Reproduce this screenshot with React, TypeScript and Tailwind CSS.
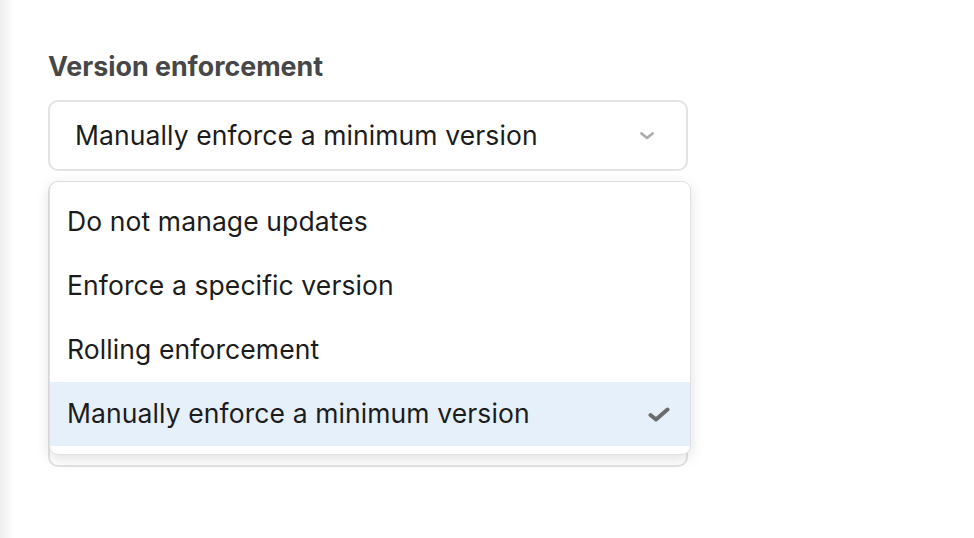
const options = [
  "Do not manage updates",
  "Enforce a specific version",
  "Rolling enforcement",
  "Manually enforce a minimum version",
];

const selected = "Manually enforce a minimum version";

function Chevron() {
  return (
    <svg width="14" height="8" viewBox="0 0 14 8" fill="none">
      <path
        d="M1.5 1.5 L7 6 L12.5 1.5"
        stroke="#adadad"
        strokeWidth="2.8"
        strokeLinecap="round"
        strokeLinejoin="round"
      />
    </svg>
  );
}

function Check() {
  return (
    <svg width="22" height="15" viewBox="0 0 22 15" fill="none">
      <path
        d="M2.5 8 L8 12.5 L19.5 2.5"
        stroke="#6b6b6b"
        strokeWidth="4"
        strokeLinecap="round"
        strokeLinejoin="round"
      />
    </svg>
  );
}

export default function App() {
  return (
    <div
      className="flex w-full h-[538px] bg-white overflow-hidden"
      style={{ fontFamily: "Inter, 'Noto Sans', sans-serif" }}
    >
      {/* sidebar shadow */}
      <div className="w-[14px] h-full bg-gradient-to-r from-[#eeeeee] to-white" />

      <div className="flex-1 pl-[34px] pt-[48px]">
        <div className="w-[640px] flex flex-col">
          <label className="text-[26.8px] leading-[36px] font-bold text-[#474747]">
            Version enforcement
          </label>

          <div className="mt-[16px] h-[71px] border-2 border-[#e3e3e3] rounded-[10px] flex items-center justify-between pl-[25px] pr-[32px]">
            <span className="text-[26.5px] tracking-[0.1px] text-[#1c1c1c]">{selected}</span>
            <Chevron />
          </div>

          {/* field behind the open menu */}
          <div className="relative mt-[10px] h-[286px] border-2 border-[#e3e3e3] rounded-[10px]">
            <div className="absolute -top-[2px] -left-[1px] w-[642px] bg-white border border-[#e0e0e0] rounded-[9px] shadow-[0_4px_14px_rgba(0,0,0,0.12)] py-[8px]">
              {options.map((opt) => {
                const active = opt === selected;
                return (
                  <div
                    key={opt}
                    className={`h-[64px] flex items-center justify-between pl-[17px] pr-[20px] ${
                      active ? "bg-[#e6f0fb]" : ""
                    }`}
                  >
                    <span className="text-[26.5px] tracking-[0.1px] text-[#1c1c1c]">{opt}</span>
                    {active && <Check />}
                  </div>
                );
              })}
            </div>
          </div>
        </div>
      </div>
    </div>
  );
}
